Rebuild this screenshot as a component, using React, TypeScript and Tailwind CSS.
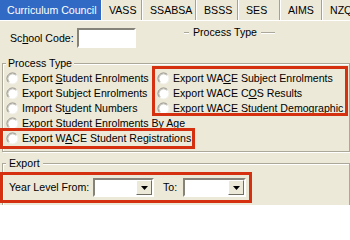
import React from "react";

const tabs = [
  { label: "Curriculum Council", w: "w-[101px]", active: true },
  { label: "VASS", w: "w-[41px]" },
  { label: "SSABSA", w: "w-[54px]" },
  { label: "BSSS", w: "w-[42px]" },
  { label: "SES", w: "w-[42px]" },
  { label: "AIMS", w: "w-[42px]" },
  { label: "NZQ", w: "w-[40px]" },
];

// access key letter, drawn underlined like a WinForms label
const K = ({ children }: { children: React.ReactNode }) => (
  <span className="underline underline-offset-[1px] decoration-1">{children}</span>
);

function Radio() {
  return (
    <svg width="13" height="13" viewBox="0 0 13 13" className="shrink-0">
      <circle cx="6.5" cy="6.5" r="5.5" fill="#FFFFFF" />
      <path d="M2.61 10.39 A5.5 5.5 0 0 1 10.39 2.61" fill="none" stroke="#84827A" strokeWidth="1" />
      <path d="M10.39 2.61 A5.5 5.5 0 0 1 2.61 10.39" fill="none" stroke="#F1EFE6" strokeWidth="1" />
      <path d="M3.32 9.68 A4.5 4.5 0 0 1 9.68 3.32" fill="none" stroke="#C4C2B8" strokeWidth="1" />
    </svg>
  );
}

function Option({ children }: { children: React.ReactNode }) {
  return (
    <div className="flex h-[15px] items-center whitespace-nowrap">
      <Radio />
      <span className="ml-[3px]">{children}</span>
    </div>
  );
}

function Combo({ w }: { w: string }) {
  return (
    <div
      className={`flex h-[19px] ${w} border-2 border-t-[#85837A] border-l-[#85837A] border-b-white border-r-white bg-white`}
    >
      <div className="flex-1" />
      <div className="flex w-[16px] items-center justify-center border border-t-white border-l-white border-b-[#716F64] border-r-[#716F64] bg-[#ECE9D8]">
        <svg width="7" height="4" viewBox="0 0 7 4">
          <polygon points="0,0 7,0 3.5,4" fill="#000" />
        </svg>
      </div>
    </div>
  );
}

export default function App() {
  return (
    <div className="relative h-[205px] w-[350px] overflow-hidden bg-[#ECE9D8] font-['Liberation_Sans',Arial,sans-serif] text-[10.6px] leading-[13px] text-black">
      {/* tab strip */}
      <div className="flex h-[21px] border-b border-white">
        {tabs.map((t) => (
          <div
            key={t.label}
            className={`flex h-full shrink-0 items-center pl-[7px] whitespace-nowrap ${t.w} ${
              t.active
                ? "bg-[#316AC5] text-white"
                : "border-l border-r border-l-white border-r-[#A5A294]"
            }`}
          >
            {t.label}
          </div>
        ))}
      </div>

      {/* school code row */}
      <div className="mt-[7px] flex h-[20px] items-start">
        <div className="ml-[10px] flex h-[20px] w-[67px] items-center">
          Sc<K>h</K>ool Code:
        </div>
        <div className="h-[20px] w-[59px] border-2 border-t-[#85837A] border-l-[#85837A] border-b-white border-r-white bg-white" />
        <div className="-mt-[2px] ml-[48px] flex h-[13px] items-center">
          <div className="h-[2px] w-[5px] border-t border-b border-t-[#ACA899] border-b-white" />
          <span className="mx-[4px]">Process Type</span>
          <div className="h-[2px] w-[14px] border-t border-b border-t-[#ACA899] border-b-white" />
        </div>
      </div>

      {/* process type group */}
      <fieldset className="mt-[9px] ml-[2px] w-[348px] border border-[#ACA899] pt-[1px] pb-[5px] pl-[3px] shadow-[inset_1px_1px_0_#fff,1px_1px_0_#fff]">
        <legend className="bg-[#ECE9D8] px-[2px] leading-[13px]">Process Type</legend>
        <div className="flex">
          <div className="flex w-[151px] flex-col">
            <Option>
              Export <K>S</K>tudent Enrolments
            </Option>
            <Option>Export Subject Enrolments</Option>
            <Option>
              Import St<K>u</K>dent Numbers
            </Option>
            <Option>Export Student Enrolments By Age</Option>
            <Option>
              Export W<K>A</K>CE Student Registrations
            </Option>
          </div>
          <div className="flex flex-col">
            <Option>
              Export WA<K>C</K>E Subject Enrolments
            </Option>
            <Option>
              Export WACE C<K>O</K>S Results
            </Option>
            <Option>Export WACE Student Demographic</Option>
          </div>
        </div>
      </fieldset>

      {/* export group */}
      <fieldset className="mt-[5px] ml-[2px] w-[348px] border border-[#ACA899] pb-[12px] pl-[3px] shadow-[inset_1px_1px_0_#fff,1px_1px_0_#fff]">
        <legend className="bg-[#ECE9D8] px-[3px] leading-[13px]">Export</legend>
        <div className="mt-[8px] flex items-center pl-[3px]">
          <span className="w-[84px] whitespace-nowrap">Year Level From:</span>
          <Combo w="w-[61px]" />
          <span className="ml-[9px] w-[20px]">To:</span>
          <Combo w="w-[63px]" />
        </div>
      </fieldset>

      {/* red annotation boxes */}
      <div className="pointer-events-none absolute top-[66px] left-[152px] h-[50px] w-[196px] border-[3px] border-[#D5300F]" />
      <div className="pointer-events-none absolute top-[128px] left-0 h-[21px] w-[195px] border-[3px] border-[#D5300F]" />
      <div className="pointer-events-none absolute top-[172px] left-0 h-[31px] w-[252px] border-[3px] border-[#D5300F]" />
    </div>
  );
}
